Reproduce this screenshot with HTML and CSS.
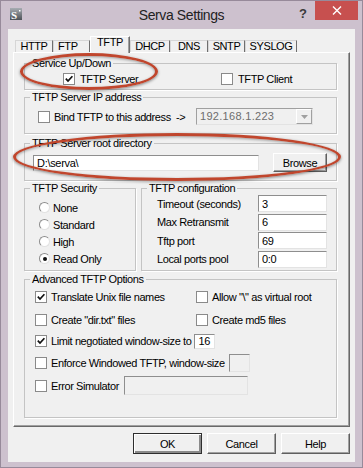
FILE: index.html
```html
<!DOCTYPE html>
<html>
<head>
<meta charset="utf-8">
<title>Serva Settings</title>
<link rel="stylesheet" href="styles.css">
</head>
<body>
<div class="window">
  <div class="titlebar">
    <div class="tb-left">
      <svg class="app-icon" width="12" height="12" viewBox="0 0 12 12">
        <defs>
          <linearGradient id="ig" x1="0" y1="0" x2="0" y2="1">
            <stop offset="0" stop-color="#a7acb2"/>
            <stop offset="1" stop-color="#4c5157"/>
          </linearGradient>
        </defs>
        <rect x="0" y="0" width="12" height="12" fill="url(#ig)"/>
        <text x="1" y="10.5" font-family="Liberation Serif, serif" font-size="11" font-weight="bold" fill="#fff">S</text>
        <rect x="9" y="2" width="1.5" height="1.5" fill="#fff"/>
      </svg>
    </div>
    <div class="title">Serva Settings</div>
    <div class="tb-right">
      <div class="help">?</div>
      <div class="close">
        <svg width="10" height="9" viewBox="0 0 10 9"><path d="M1 0.5 L9 8.5 M9 0.5 L1 8.5" stroke="#fff" stroke-width="1.4"/></svg>
      </div>
    </div>
  </div>

  <div class="client">
    <div class="tabs">
      <div class="tab tab-http">HTTP</div>
      <div class="tab tab-ftp">FTP</div>
      <div class="tab tab-tftp selected">TFTP</div>
      <div class="tab tab-dhcp">DHCP</div>
      <div class="tab tab-dns">DNS</div>
      <div class="tab tab-sntp">SNTP</div>
      <div class="tab tab-syslog">SYSLOG</div>
    </div>

    <div class="panel">
      <fieldset class="group g-service">
        <legend>Service Up/Down</legend>
        <div class="inner service-row">
          <label class="opt"><span class="cb checked"><svg viewBox="0 0 10 10"><path d="M1.8 4.6 L4 7 L8.4 2.2" /></svg></span>TFTP Server</label>
          <label class="opt"><span class="cb"></span>TFTP Client</label>
        </div>
      </fieldset>

      <fieldset class="group g-ip">
        <legend>TFTP Server IP address</legend>
        <div class="inner ip-row">
          <label class="opt"><span class="cb"></span>Bind TFTP to this address&nbsp; -&gt;</label>
          <div class="combo">
            <span class="combo-text">192.168.1.223</span>
            <span class="combo-btn"><svg width="7" height="4" viewBox="0 0 7 4"><path d="M0 0 H7 L3.5 4 Z" fill="#a0a0a0"/></svg></span>
          </div>
        </div>
      </fieldset>

      <fieldset class="group g-root">
        <legend>TFTP Server root directory</legend>
        <div class="inner root-row">
          <input class="field root-input" type="text" value="D:\serva\" readonly>
          <button class="btn browse" type="button">Browse</button>
        </div>
      </fieldset>

      <div class="split">
        <fieldset class="group g-sec">
          <legend>TFTP Security</legend>
          <div class="inner radios">
            <label class="opt radio-row"><span class="rb"></span>None</label>
            <label class="opt radio-row"><span class="rb"></span>Standard</label>
            <label class="opt radio-row"><span class="rb"></span>High</label>
            <label class="opt radio-row"><span class="rb on"></span>Read Only</label>
          </div>
        </fieldset>
        <fieldset class="group g-conf">
          <legend>TFTP configuration</legend>
          <div class="inner conf-grid">
            <span class="conf-label">Timeout (seconds)</span><input class="field conf-input" type="text" value="3" readonly>
            <span class="conf-label">Max Retransmit</span><input class="field conf-input" type="text" value="6" readonly>
            <span class="conf-label">Tftp port</span><input class="field conf-input" type="text" value="69" readonly>
            <span class="conf-label">Local ports pool</span><input class="field conf-input" type="text" value="0:0" readonly>
          </div>
        </fieldset>
      </div>

      <fieldset class="group g-adv">
        <legend>Advanced TFTP Options</legend>
        <div class="inner adv">
          <div class="adv-row adv-two adv-first">
            <label class="opt"><span class="cb checked"><svg viewBox="0 0 10 10"><path d="M1.8 4.6 L4 7 L8.4 2.2" /></svg></span>Translate Unix file names</label>
            <label class="opt"><span class="cb"></span>Allow "\" as virtual root</label>
          </div>
          <div class="adv-row adv-two">
            <label class="opt"><span class="cb"></span>Create "dir.txt" files</label>
            <label class="opt"><span class="cb"></span>Create md5 files</label>
          </div>
          <div class="adv-row">
            <label class="opt"><span class="cb checked"><svg viewBox="0 0 10 10"><path d="M1.8 4.6 L4 7 L8.4 2.2" /></svg></span>Limit negotiated window-size to</label>
            <input class="field small-input" type="text" value="16" readonly>
          </div>
          <div class="adv-row adv-gap">
            <label class="opt"><span class="cb"></span>Enforce Windowed TFTP, window-size</label>
            <input class="field disabled ws-input" type="text" value="" readonly>
          </div>
          <div class="adv-row">
            <label class="opt"><span class="cb"></span>Error Simulator</label>
            <input class="field disabled err-input" type="text" value="" readonly>
          </div>
        </div>
      </fieldset>

      <div class="mark mark-service"></div>
      <div class="mark mark-root"></div>
    </div>

    <div class="buttons">
      <button class="btn default" type="button">OK</button>
      <button class="btn" type="button">Cancel</button>
      <button class="btn" type="button">Help</button>
    </div>
  </div>
</div>
</body>
</html>
```

FILE: styles.css
```css
* { box-sizing: border-box; }
html, body { margin: 0; padding: 0; }
body {
  width: 363px;
  height: 468px;
  overflow: hidden;
  font-family: "Liberation Sans", Arial, sans-serif;
  font-size: 11px;
  letter-spacing: -0.4px;
  color: #000;
  background: #cbbfcc;
}
.window {
  width: 363px;
  height: 468px;
  border: 1px solid #978a9a;
  background: #cdc1ce;
  display: flex;
  flex-direction: column;
}

/* title bar */
.titlebar {
  height: 28px;
  flex: none;
  display: grid;
  grid-template-columns: 1fr auto 1fr;
  align-items: start;
}
.tb-left { display: flex; padding: 7px 0 0 9px; }
.app-icon { display: block; }
.title {
  font-size: 14px;
  letter-spacing: -0.4px;
  line-height: 17px;
  padding-top: 6px;
  color: #222;
}
.tb-right { display: flex; justify-content: flex-end; align-items: flex-start; }
.help {
  font-size: 13px;
  font-weight: bold;
  line-height: 13px;
  padding-top: 6px;
  margin-right: 8px;
  color: #3a3a3a;
  letter-spacing: 0;
}
.close {
  width: 43px;
  height: 19px;
  margin-right: 4px;
  background: #c7504f;
  display: flex;
  align-items: center;
  justify-content: center;
}
.close svg { display: block; }

/* client area */
.client {
  margin: 0 7px;
  height: 433px;
  background: #f0f0f0;
  padding: 7px 5px 0;
}

/* tabs */
.tabs {
  display: flex;
  align-items: flex-end;
  height: 16px;
  margin-left: 2px;
  position: relative;
  z-index: 1;
}
.tab {
  height: 12px;
  line-height: 11px;
  text-align: center;
  border: 1px solid #d6d6d6;
  border-bottom: 0;
  border-right-color: #6f6f6f;
  background: #f0f0f0;
  flex: none;
}
.tab-http { width: 38px; }
.tab-ftp { width: 37px; text-align: left; padding-left: 4px; }
.tab-tftp { width: 40px; }
.tab-dhcp { width: 40px; }
.tab-dns { width: 38px; }
.tab-sntp { width: 37px; }
.tab-syslog { width: 52px; }
.tab.selected {
  height: 17px;
  margin-bottom: -1px;
  border-color: #fff #6f6f6f #f0f0f0 #fff;
  box-shadow: inset -1px 0 0 #a0a0a0;
}

/* panel */
.panel {
  position: relative;
  height: 375px;
  border: 1px solid;
  border-color: #fff #696969 #696969 #fff;
  box-shadow: inset -1px -1px 0 #a0a0a0;
  padding: 4px 12px 0 10px;
  display: flex;
  flex-direction: column;
}

/* group boxes */
.group {
  margin: 0;
  padding: 0;
  min-width: 0;
  border: 1px solid #c4c4c4;
  box-shadow: 1px 1px 0 #fff;
  flex: none;
}
.group legend {
  margin-left: 5px;
  padding: 0 2px;
  line-height: 13px;
  font-size: 11px;
}
.g-service { height: 33px; }
.g-ip { height: 43px; margin-top: 1px; }
.g-root { height: 44px; margin-top: 3px; }
.split { display: flex; gap: 5px; height: 89px; margin-top: 1px; flex: none; }
.g-sec { width: 112px; height: 89px; }
.g-conf { width: 196px; height: 89px; }
.g-adv { height: 145px; margin-top: 2px; }

.opt {
  display: flex;
  align-items: center;
  gap: 4px;
  white-space: nowrap;
}

/* checkbox */
.cb {
  width: 12px;
  height: 12px;
  flex: none;
  background: #fff;
  border: 1px solid #8a8a8a;
  display: flex;
  align-items: center;
  justify-content: center;
}
.cb svg { width: 10px; height: 10px; display: block; }
.cb svg path { fill: none; stroke: #111; stroke-width: 1.7; }

/* radio */
.rb {
  width: 11px;
  height: 11px;
  flex: none;
  border-radius: 50%;
  background: #fff;
  border: 1px solid;
  border-color: #8c8c8c #e2e2e2 #e2e2e2 #8c8c8c;
  display: flex;
  align-items: center;
  justify-content: center;
}
.rb.on::after {
  content: "";
  width: 4px;
  height: 4px;
  border-radius: 50%;
  background: #111;
}

/* fields */
.field {
  font: inherit;
  letter-spacing: -0.3px;
  color: #000;
  margin: 0;
  padding: 0 3px;
  background: #fff;
  border: 1px solid;
  border-color: #8e8e8e #e3e3e3 #e3e3e3 #8e8e8e;
  outline: none;
}
.field.disabled { background: #f0f0f0; }

.btn {
  font: inherit;
  letter-spacing: -0.4px;
  color: #000;
  margin: 0;
  padding: 0;
  background: #f0f0f0;
  border: 1px solid;
  border-color: #fff #5f5f5f #5f5f5f #fff;
  box-shadow: inset -1px -1px 0 #a0a0a0;
}

/* service */
.service-row {
  display: grid;
  grid-template-columns: 158px auto;
  align-items: center;
  height: 12px;
  margin-top: 3px;
  padding-left: 38px;
}
.service-row .opt { gap: 5px; }

/* ip */
.ip-row {
  display: grid;
  grid-template-columns: 158px 117px;
  align-items: center;
  height: 17px;
  margin-top: 4px;
  padding-left: 13px;
}
.combo {
  height: 17px;
  display: flex;
  align-items: stretch;
  background: #f0f0f0;
  border: 1px solid;
  border-color: #a0a0a0 #e3e3e3 #e3e3e3 #a0a0a0;
}
.combo-text {
  flex: 1;
  color: #6d6d6d;
  letter-spacing: 0.3px;
  padding-left: 3px;
  line-height: 15px;
}
.combo-btn {
  width: 16px;
  display: flex;
  align-items: center;
  justify-content: center;
  border: 1px solid;
  border-color: #fff #a0a0a0 #a0a0a0 #fff;
}

/* root */
.root-row {
  display: flex;
  align-items: center;
  height: 19px;
  margin-top: 3px;
  padding-left: 8px;
}
.root-input { width: 226px; height: 16px; }
.browse { width: 54px; height: 19px; margin-left: 14px; }

/* security */
.radios { padding: 4px 0 0 14px; }
.radio-row { height: 17px; gap: 3px; }

/* configuration */
.conf-grid {
  display: grid;
  grid-template-columns: 101px 69px;
  grid-auto-rows: 17px;
  row-gap: 1.5px;
  align-items: center;
  padding-left: 15px;
}
.conf-input { height: 17px; width: 69px; }

/* advanced */
.adv {
  display: flex;
  flex-direction: column;
  gap: 3.5px;
  padding: 1.5px 0 0 10px;
}
.adv-row {
  display: flex;
  align-items: center;
  height: 18px;
}
.adv-two {
  display: grid;
  grid-template-columns: 161px auto;
}
.adv-first, .adv-gap { margin-bottom: 1.5px; }
.small-input { width: 21px; height: 15px; margin-left: 3px; }
.ws-input { width: 21px; height: 18px; margin-left: 4px; }
.err-input { width: 124px; height: 19px; margin-left: 5px; }

/* red annotation ellipses */
.mark {
  position: absolute;
  border: 3px solid #c0462d;
  border-radius: 50%;
  box-shadow: 0 1px 3px rgba(0, 0, 0, 0.45), inset 0 1px 3px rgba(0, 0, 0, 0.35);
  pointer-events: none;
}
.mark-service { left: 6px; top: 0; width: 138px; height: 37px; }
.mark-root { left: -1px; top: 80px; width: 328px; height: 48px; }

/* dialog buttons */
.buttons {
  display: flex;
  justify-content: flex-end;
  gap: 5px;
  margin-top: 6px;
}
.buttons .btn { width: 69px; height: 21px; }
.btn.default {
  border-color: #2e2e2e;
  box-shadow: inset 1px 1px 0 #fff, inset -2px -2px 0 #8a8a8a;
}
```
